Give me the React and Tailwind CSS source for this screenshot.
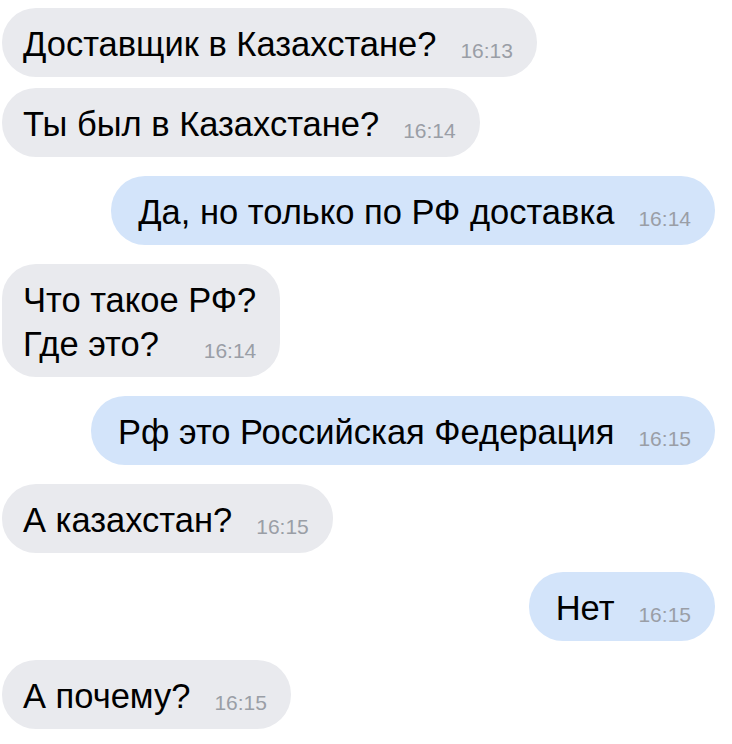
import React from 'react';

const messages = [
  { id: 1, out: false, lines: ['Доставщик в Казахстане?'], time: '16:13' },
  { id: 2, out: false, lines: ['Ты был в Казахстане?'], time: '16:14' },
  { id: 3, out: true, lines: ['Да, но только по РФ доставка'], time: '16:14' },
  { id: 4, out: false, lines: ['Что такое РФ?', 'Где это?'], time: '16:14' },
  { id: 5, out: true, lines: ['Рф это Российская Федерация'], time: '16:15' },
  { id: 6, out: false, lines: ['А казахстан?'], time: '16:15' },
  { id: 7, out: true, lines: ['Нет'], time: '16:15' },
  { id: 8, out: false, lines: ['А почему?'], time: '16:15' },
];

const Bubble = ({ msg, first, sameAsPrev }) => {
  const gap = first ? '' : sameAsPrev ? 'mt-[11px]' : 'mt-[19px]';
  const head = msg.lines.slice(0, -1);
  const last = msg.lines[msg.lines.length - 1];
  return (
    <div className={`flex ${msg.out ? 'justify-end pr-[17px]' : 'justify-start pl-[2px]'} ${gap}`}>
      <div
        className={`rounded-[34px] pt-[14px] pb-[11px] pr-[24px] text-[34.5px] leading-[44px] text-black whitespace-nowrap ${
          msg.out ? 'bg-[#d3e4fa] pl-[27px]' : 'bg-[#e9eaee] pl-[21px]'
        }`}
      >
        {head.map((line, i) => (
          <div key={i}>{line}</div>
        ))}
        <div className="flex items-end justify-between">
          <span>{last}</span>
          <span className="ml-[24px] mb-[5px] text-[21px] leading-[21px] text-[#9a9ea6]">{msg.time}</span>
        </div>
      </div>
    </div>
  );
};

export default function App() {
  return (
    <div
      className="min-h-[744px] w-full bg-white pt-[8px] flex flex-col"
      style={{ fontFamily: '"Liberation Sans", Arial, sans-serif' }}
    >
      {messages.map((m, i) => (
        <Bubble key={m.id} msg={m} first={i === 0} sameAsPrev={i > 0 && messages[i - 1].out === m.out} />
      ))}
    </div>
  );
}
